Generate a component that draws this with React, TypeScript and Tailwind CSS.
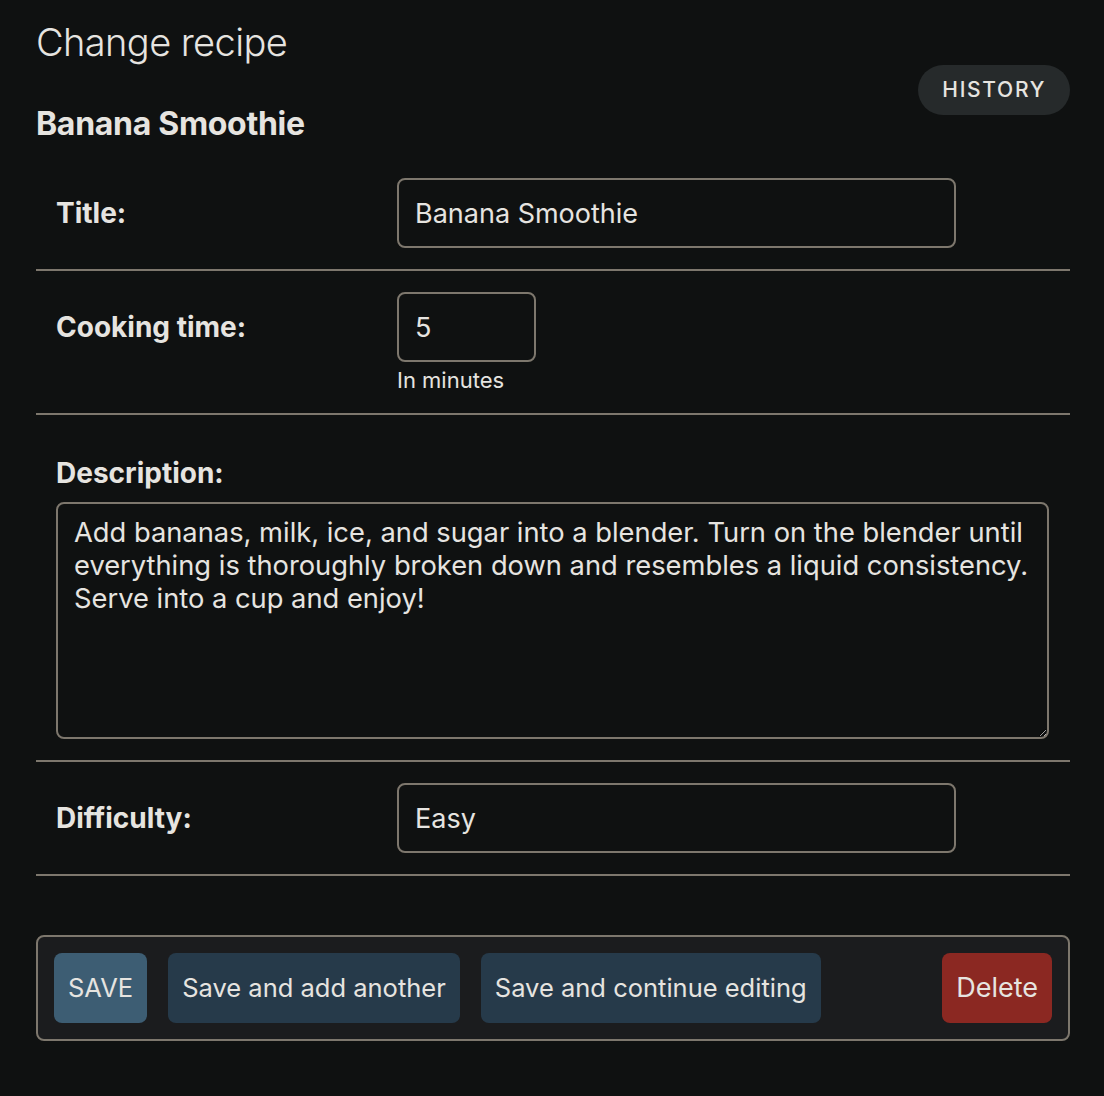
import React from "react";

const font = { fontFamily: "Inter, 'Noto Sans', sans-serif" };

function Row({ label, children }: { label: string; children: React.ReactNode }) {
  return (
    <div className="flex border-b-2 border-[#7d776d] px-5 py-[21px]">
      <label className="w-[341px] shrink-0 h-[70px] flex items-center text-[28px] font-bold">
        {label}
      </label>
      <div className="flex flex-col">{children}</div>
    </div>
  );
}

export default function App() {
  return (
    <div
      className="min-h-[1096px] w-[1104px] bg-[#0f1111] text-[#e6e4e0] pl-9 pr-[34px] pt-[18px]"
      style={font}
    >
      <h1 className="text-[38px] font-light leading-[48px] tracking-[-0.6px]">Change recipe</h1>
      <div className="flex justify-between items-start">
        <h2 className="text-[32px] font-bold leading-[40px] mt-[38px] tracking-[-0.3px]">
          Banana Smoothie
        </h2>
        <button className="mt-[-1px] h-[50px] px-[24px] rounded-full bg-[#262a2b] text-[21px] font-medium tracking-[1.7px]">
          HISTORY
        </button>
      </div>

      <div className="mt-[13px]">
        <Row label="Title:">
          <input
            defaultValue="Banana Smoothie"
            className="w-[559px] h-[70px] rounded-lg border-2 border-[#7d776d] bg-[#0f1111] px-4 text-[27px] outline-none"
          />
        </Row>

        <div className="flex border-b-2 border-[#7d776d] px-5 pt-[21px] pb-[20px]">
          <label className="w-[341px] shrink-0 h-[70px] flex items-center text-[28px] font-bold">
            Cooking time:
          </label>
          <div className="flex flex-col">
            <input
              defaultValue="5"
              className="w-[139px] h-[70px] rounded-lg border-2 border-[#7d776d] bg-[#0f1111] px-4 text-[27px] outline-none"
            />
            <span className="text-[22px] leading-[26px] mt-[5px]">In minutes</span>
          </div>
        </div>

        <div className="border-b-2 border-[#7d776d] px-5 pt-[39px] pb-[21px]">
          <label className="block text-[28px] font-bold leading-[38px]">Description:</label>
          <textarea
            defaultValue="Add bananas, milk, ice, and sugar into a blender. Turn on the blender until everything is thoroughly broken down and resembles a liquid consistency. Serve into a cup and enjoy!"
            className="mt-[10px] block w-[993px] h-[237px] rounded-lg border-2 border-[#7d776d] bg-[#0f1111] px-4 py-[12px] text-[27.3px] leading-[33px] outline-none"
          />
        </div>

        <Row label="Difficulty:">
          <input
            defaultValue="Easy"
            className="w-[559px] h-[70px] rounded-lg border-2 border-[#7d776d] bg-[#0f1111] px-4 text-[27px] outline-none"
          />
        </Row>
      </div>

      <div className="mt-[59px] flex items-center gap-[21px] rounded-lg border-2 border-[#7d776d] bg-[#1b1c1e] px-4 py-4">
        <button className="h-[70px] px-[14px] rounded-lg bg-[#3d5d73] text-[25.5px]">SAVE</button>
        <button className="h-[70px] px-[14px] rounded-lg bg-[#263a4a] text-[25.5px]">
          Save and add another
        </button>
        <button className="h-[70px] px-[14px] rounded-lg bg-[#263a4a] text-[25.5px]">
          Save and continue editing
        </button>
        <button className="ml-auto h-[70px] px-[14px] rounded-lg bg-[#8b2822] text-[27px]">
          Delete
        </button>
      </div>
    </div>
  );
}
